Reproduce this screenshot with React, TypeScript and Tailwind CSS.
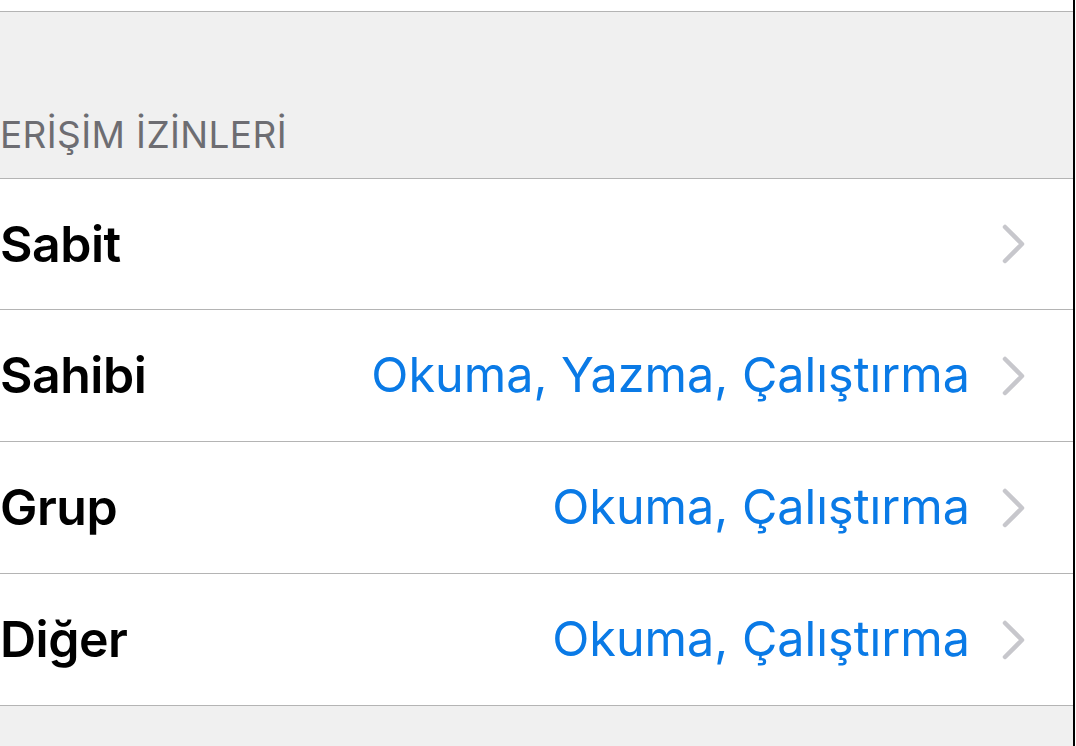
const rows = [
  { label: "Sabit", value: "", h: "h-[131px]" },
  { label: "Sahibi", value: "Okuma, Yazma, Çalıştırma", h: "h-[132px]" },
  { label: "Grup", value: "Okuma, Çalıştırma", h: "h-[132px]" },
  { label: "Diğer", value: "Okuma, Çalıştırma", h: "h-[132px]" },
];

function Chevron() {
  return (
    <svg width="26" height="40" viewBox="0 0 26 40" className="shrink-0">
      <path
        d="M4 3 L21 20 L4 37"
        fill="none"
        stroke="#c7c7cc"
        strokeWidth="4.5"
        strokeLinecap="round"
        strokeLinejoin="round"
      />
    </svg>
  );
}

export default function App() {
  return (
    <div className="flex h-[746px] w-[1076px] font-['Inter',sans-serif]">
      <div className="flex min-w-0 flex-1 flex-col bg-[#f0f0f0]">
        <div className="h-[12px] shrink-0 border-b border-[#b4b4b4] bg-white" />

        <div className="flex h-[167px] shrink-0 items-end border-b border-[#b4b4b4] pb-[25px]">
          <span className="text-[37px] leading-none tracking-[0.01em] text-[#6d6d72]">
            ERİŞİM İZİNLERİ
          </span>
        </div>

        {rows.map((r) => (
          <div
            key={r.label}
            className={`flex ${r.h} shrink-0 items-center border-b border-[#b4b4b4] bg-white pr-[46px]`}
          >
            <span className="flex-1 text-[50px] font-semibold tracking-[-0.01em] text-black">
              {r.label}
            </span>
            {r.value && (
              <span className="text-[48.5px] text-[#0a7ae6]">{r.value}</span>
            )}
            <div className="ml-[31px]">
              <Chevron />
            </div>
          </div>
        ))}
      </div>
      <div className="w-[2px] bg-black" />
      <div className="w-[1px] bg-white" />
    </div>
  );
}
